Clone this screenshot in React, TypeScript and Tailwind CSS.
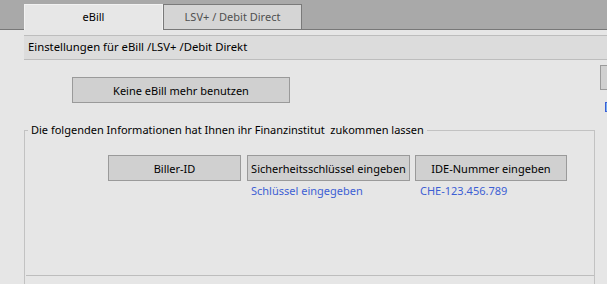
import React from 'react';

const FONT = { fontFamily: '"Noto Sans", "Open Sans", sans-serif' };

const GrayButton = ({ label, className }: { label: string; className: string }) => (
  <button
    type="button"
    className={`h-[26px] bg-[#d0d0d0] border border-[#9a9a9a] text-[11px] text-black leading-none whitespace-nowrap flex items-center justify-center ${className}`}
  >
    {label}
  </button>
);

const App = () => {
  return (
    <div className="relative w-[607px] h-[284px] overflow-hidden bg-[#e6e6e6] text-[11px] text-black" style={FONT}>
      {/* tab strip */}
      <div className="h-[30px] bg-[#a9a9a9] border-b border-[#787878] flex items-end pl-[24px]">
        <div className="w-[139px] h-[26px] -mb-px bg-[#e7e7e7] border-l border-t border-r border-[#f2f2f2] flex items-center justify-center pb-[1px]">
          eBill
        </div>
        <div className="w-[139px] h-[25px] bg-[#d5d5d5] border border-b-0 border-[#7a7a7a] flex items-center justify-center text-[#505050]">
          LSV+ / Debit Direct
        </div>
      </div>

      {/* section header */}
      <div className="mt-[5px] ml-[24px] h-[25px] bg-[#dcdcdc] border-t border-b border-[#bdbdbd] flex items-center pl-[4px] text-[11.3px]">
        Einstellungen für eBill /LSV+ /Debit Direkt
      </div>

      <div className="mt-[17px] ml-[72px]">
        <GrayButton label="Keine eBill mehr benutzen" className="w-[218px]" />
      </div>

      {/* clipped controls at the right edge */}
      <div className="absolute left-[600px] top-[65px] w-[40px] h-[25px] bg-[#d0d0d0] border border-[#9a9a9a]" />
      <div className="absolute left-[605px] top-[102px] w-[10px] h-[10px] border border-[#3b5fd6] bg-[#7ab0f0]" />

      {/* group box */}
      <fieldset className="mt-[19px] ml-[24px] w-[571px] h-[175px] border border-[#c2c2c2] flex flex-col">
        <legend className="ml-[3px] px-[3px] leading-[16px]">
          Die folgenden Informationen hat Ihnen ihr Finanzinstitut&nbsp; zukommen lassen
        </legend>
        <div className="mt-[17px] ml-[83px] flex gap-[5px]">
          <div className="flex flex-col">
            <GrayButton label="Biller-ID" className="w-[133px]" />
          </div>
          <div className="flex flex-col ml-px">
            <GrayButton label="Sicherheitsschlüssel eingeben" className="w-[163px]" />
            <span className="mt-[2px] ml-[4px] leading-[16px] text-[#3d5fd4]">Schlüssel eingegeben</span>
          </div>
          <div className="flex flex-col">
            <GrayButton label="IDE-Nummer eingeben" className="w-[152px]" />
            <span className="mt-[2px] ml-[5px] leading-[16px] text-[#3d5fd4]">CHE-123.456.789</span>
          </div>
        </div>
        <div className="mt-[76px] ml-px border-t border-[#bdbdbd]" />
      </fieldset>
    </div>
  );
};

export default App;
